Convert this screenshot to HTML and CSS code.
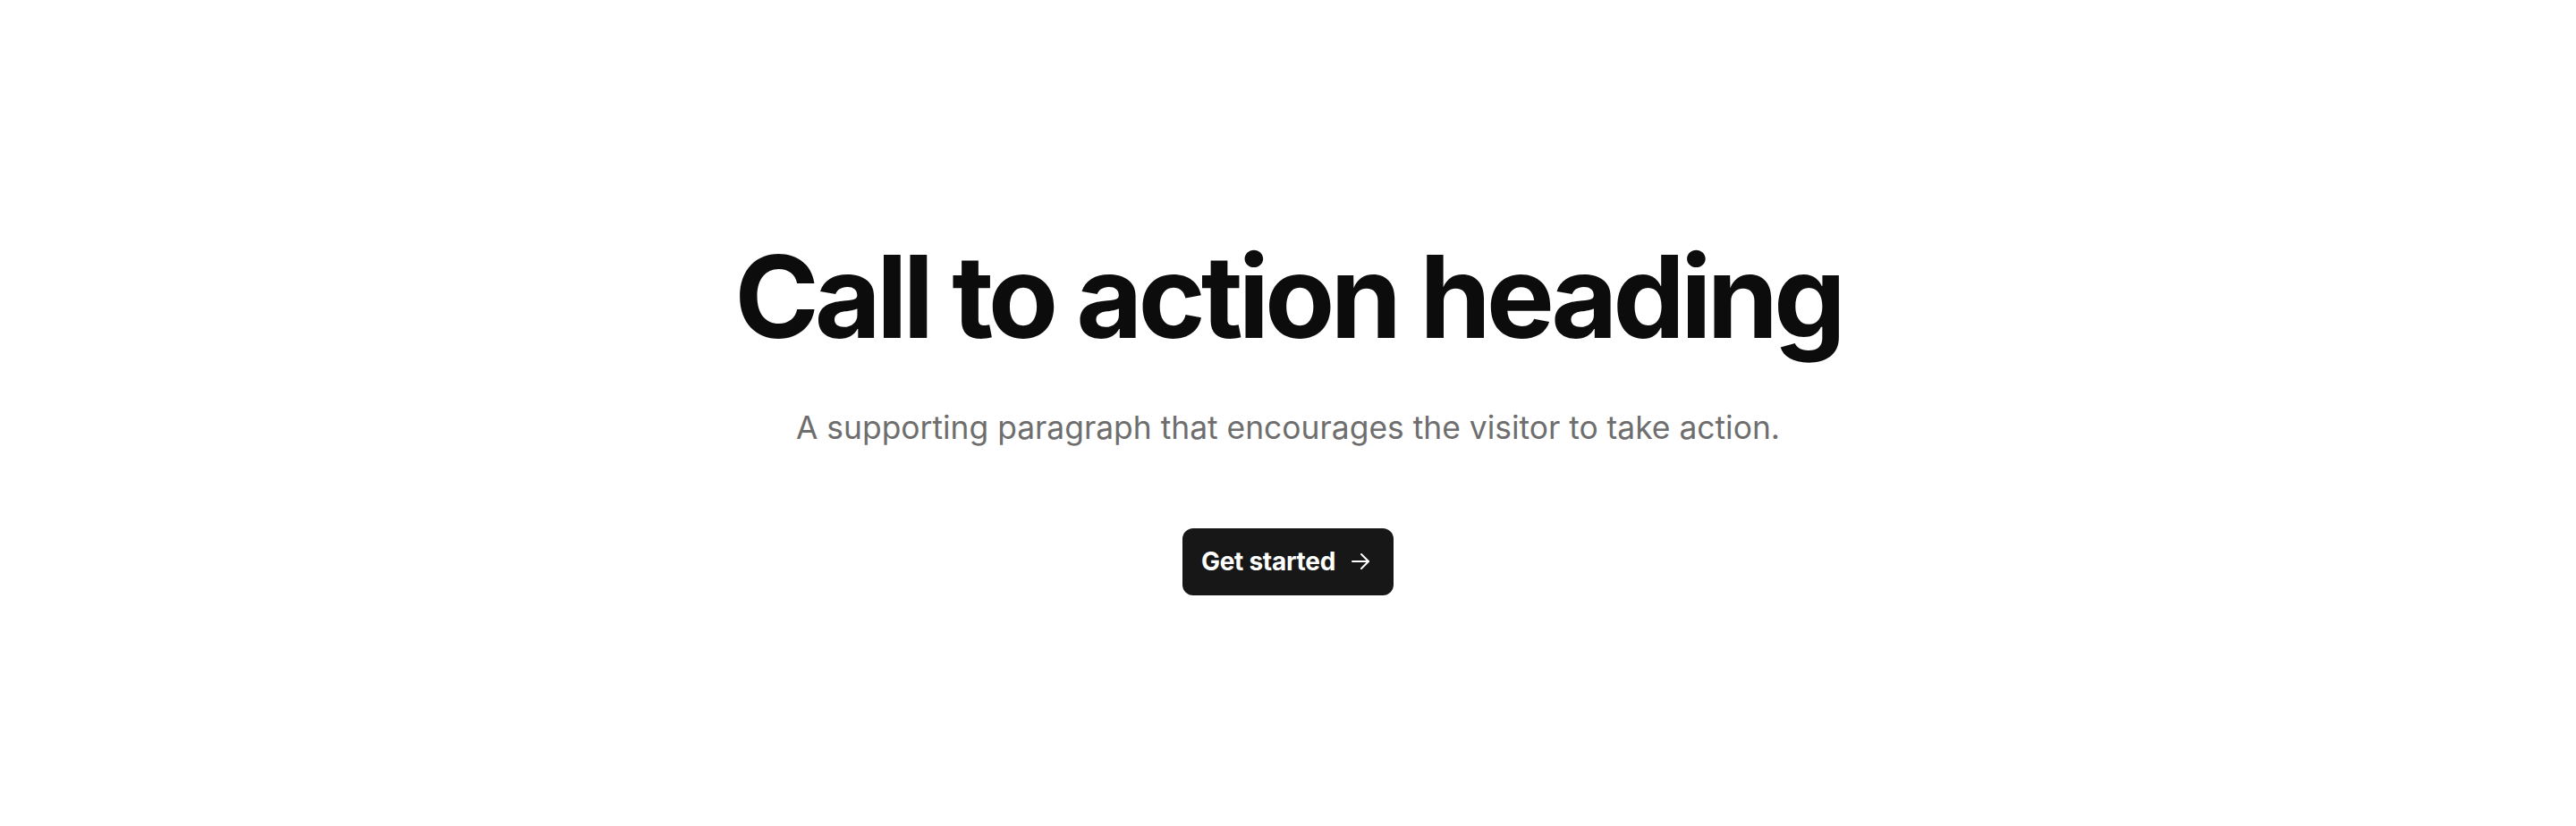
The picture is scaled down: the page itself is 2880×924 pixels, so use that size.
FILE: index.html
```html
<!DOCTYPE html>
<html lang="en">
<head>
<meta charset="utf-8">
<title>Call to action</title>
<link rel="stylesheet" href="styles.css">
</head>
<body>
<main class="cta">
  <h1 class="cta-title">Call to action heading</h1>
  <p class="cta-text">A supporting paragraph that encourages the visitor to take action.</p>
  <a class="cta-button" href="#">
    <span>Get started</span>
    <svg class="cta-icon" viewBox="0 0 22 22" fill="none" stroke="currentColor" stroke-width="2" stroke-linecap="round" stroke-linejoin="round" aria-hidden="true">
      <path d="M2 11h18"/>
      <path d="M12 3l8 8-8 8"/>
    </svg>
  </a>
</main>
</body>
</html>
```

FILE: styles.css
```css
html, body {
  margin: 0;
  padding: 0;
  background: #ffffff;
}

body {
  font-family: Inter, "Noto Sans", "Liberation Sans", sans-serif;
  color: #0f0f0f;
}

.cta {
  height: 924px;
  padding-top: 4px;
  box-sizing: border-box;
  display: flex;
  flex-direction: column;
  align-items: center;
  justify-content: center;
  text-align: center;
}

.cta-title {
  margin: 0;
  font-size: 128px;
  font-weight: 700;
  line-height: 1.1;
  letter-spacing: -0.04em;
  color: #0c0c0c;
}

.cta-text {
  margin: 49px 0 0;
  font-size: 35.4px;
  line-height: 1.5;
  color: #6e6e6e;
}

.cta-button {
  margin-top: 86px;
  display: inline-flex;
  align-items: center;
  gap: 17px;
  height: 75px;
  padding: 0 26px 0 21px;
  box-sizing: border-box;
  border-radius: 12px;
  background: #171717;
  color: #ffffff;
  text-decoration: none;
  font-size: 28px;
  font-weight: 700;
  letter-spacing: -0.01em;
}

.cta-icon {
  width: 22px;
  height: 22px;
}
```
